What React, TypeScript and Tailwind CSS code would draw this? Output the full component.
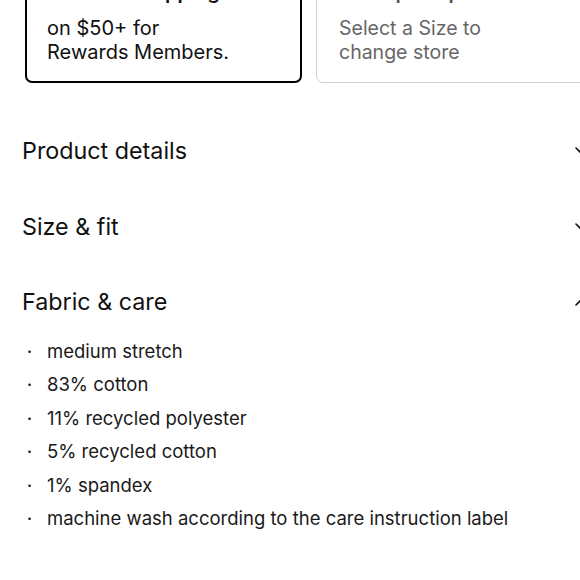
import React from "react";

const Chevron = ({ up }: { up?: boolean }) => (
  <svg width="16" height="16" viewBox="0 0 16 16" fill="none" className="shrink-0">
    <path
      d={up ? "M2 11L8 5L14 11" : "M2 5L8 11L14 5"}
      stroke="#111"
      strokeWidth="1.6"
      strokeLinecap="round"
      strokeLinejoin="round"
    />
  </svg>
);

const items = [
  "medium stretch",
  "83% cotton",
  "11% recycled polyester",
  "5% recycled cotton",
  "1% spandex",
  "machine wash according to the care instruction label",
];

export default function App() {
  return (
    <div
      className="w-[580px] h-[580px] overflow-hidden bg-white relative text-[#111]"
      style={{ fontFamily: "Inter, 'Noto Sans', sans-serif" }}
    >
      <div className="w-[612px] -mt-[34px]">
        <div className="flex gap-[14px] pl-[25px]">
          <div className="w-[277px] border-2 border-black rounded-[7px] pl-[20px] pt-[12px] pb-[17px]">
            <div className="text-[20px] font-semibold leading-[24px] mb-[12px]">Free fast shipping</div>
            <div className="text-[20px] leading-[24px]">on $50+ for</div>
            <div className="text-[20px] leading-[24px]">Rewards Members.</div>
          </div>
          <div className="w-[277px] border border-[#cfcfcf] rounded-[7px] pl-[22px] pt-[13px] pb-[18px]">
            <div className="text-[20px] font-semibold leading-[24px] mb-[12px] text-[#555]">Store pickup</div>
            <div className="text-[19.5px] leading-[24px] text-[#666]">Select a Size to</div>
            <div className="text-[19.5px] leading-[24px] text-[#666]">change store</div>
          </div>
        </div>
        <div className="px-[22px] pt-[52px]">
          <div className="flex items-center justify-between h-[32px]">
            <span className="text-[23.3px]">Product details</span>
            <Chevron />
          </div>
          <div className="flex items-center justify-between h-[32px] mt-[44px]">
            <span className="text-[23.3px]">Size &amp; fit</span>
            <Chevron />
          </div>
          <div className="flex items-center justify-between h-[32px] mt-[43px]">
            <span className="text-[23.3px]">Fabric &amp; care</span>
            <Chevron up />
          </div>
          <ul className="mt-[17px] flex flex-col">
            {items.map((t) => (
              <li key={t} className="flex items-center h-[33.5px] text-[18.5px] text-[#1a1a1a]">
                <span className="w-[25px] pl-[5px] text-[15px] font-bold">·</span>
                <span>{t}</span>
              </li>
            ))}
          </ul>
        </div>
      </div>
    </div>
  );
}
